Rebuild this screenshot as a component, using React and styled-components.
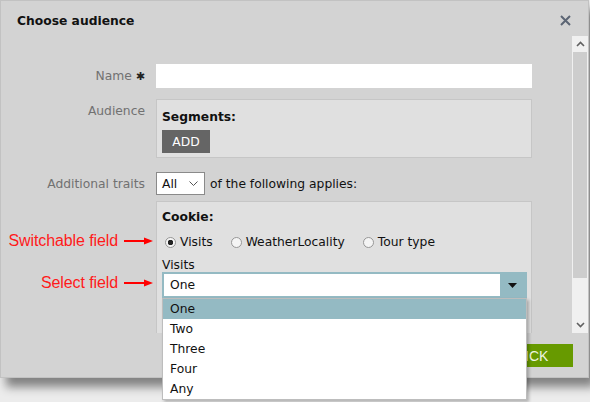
import styled, { createGlobalStyle } from "styled-components";

const GlobalStyle = createGlobalStyle`
  body {
    margin: 0;
    background: #ececec;
    font-family: "DejaVu Sans", Verdana, sans-serif;
    font-size: 12.3px;
    color: #111;
  }
`;

const options = ["One", "Two", "Three", "Four", "Any"];

function App() {
  return (
    <Page>
      <GlobalStyle />
      <Dialog>
        <Header>
          <Title>Choose audience</Title>
          <CloseButton aria-label="close">
            <svg width="11" height="11" viewBox="0 0 11 11">
              <path d="M1 1 L10 10 M10 1 L1 10" stroke="#5c6574" strokeWidth="2" />
            </svg>
          </CloseButton>
        </Header>

        <Body>
          <ScrollArea>
            <Form>
              <Label $center>
                Name <Star>✱</Star>
              </Label>
              <TextInput />

              <Label $top={5} $gap={11}>Audience</Label>
              <Panel $gap={11} $height={59} $pad={10}>
                <PanelTitle>Segments:</PanelTitle>
                <DarkButton>ADD</DarkButton>
              </Panel>

              <Label $center $gap={14}>Additional traits</Label>
              <TraitsRow $gap={14}>
                <SmallSelect>
                  All
                  <svg width="9" height="6" viewBox="0 0 9 6">
                    <path d="M0.5 0.5 L4.5 4.5 L8.5 0.5" fill="none" stroke="#555" strokeWidth="1" />
                  </svg>
                </SmallSelect>
                of the following applies:
              </TraitsRow>

              <Notes $gap={6}>
                <Note>
                  Switchable field
                  <Arrow />
                </Note>
                <Note>
                  Select field
                  <Arrow />
                </Note>
              </Notes>
              <Panel $gap={6} $height={180} $pad={8}>
                <PanelTitle>Cookie:</PanelTitle>
                <RadioRow>
                  <Radio $checked>Visits</Radio>
                  <Radio>WeatherLocality</Radio>
                  <Radio>Tour type</Radio>
                </RadioRow>
                <FieldName>Visits</FieldName>
                <Select>
                  <SelectValue>One</SelectValue>
                  <SelectToggle>
                    <svg width="9" height="5" viewBox="0 0 9 5">
                      <path d="M0 0 L9 0 L4.5 5 Z" fill="#111" />
                    </svg>
                  </SelectToggle>
                </Select>
              </Panel>
            </Form>
          </ScrollArea>
          <Scrollbar>
            <ScrollArrow>
              <svg width="9" height="6" viewBox="0 0 9 6">
                <path d="M1 5 L4.5 1.5 L8 5" fill="none" stroke="#606060" strokeWidth="1.6" />
              </svg>
            </ScrollArrow>
            <Thumb />
            <ScrollArrow>
              <svg width="9" height="6" viewBox="0 0 9 6">
                <path d="M1 1 L4.5 4.5 L8 1" fill="none" stroke="#606060" strokeWidth="1.6" />
              </svg>
            </ScrollArrow>
          </Scrollbar>
        </Body>

        <Footer>
          <PickButton>PICK</PickButton>
        </Footer>
      </Dialog>

      <OptionList>
        {options.map((o, i) => (
          <Option key={o} $active={i === 0}>
            {o}
          </Option>
        ))}
      </OptionList>
    </Page>
  );
}

function Arrow() {
  return (
    <svg width="29" height="8" viewBox="0 0 29 8">
      <path d="M0 4 L22 4" stroke="#f00" strokeWidth="2" />
      <path d="M20 0.5 L29 4 L20 7.5 Z" fill="#f00" />
    </svg>
  );
}

/* ---------------- Styled Components ---------------- */

const Page = styled.div`
  position: relative;
  width: 590px;
  height: 402px;
  overflow: hidden;
`;

const Dialog = styled.div`
  box-sizing: border-box;
  width: 589px;
  height: 378px;
  background: #d3d3d3;
  border: 1px solid #c2c2c2;
  box-shadow: 6px 9px 9px rgba(0, 0, 0, 0.45);
  display: flex;
  flex-direction: column;
`;

const Header = styled.div`
  height: 35px;
  display: flex;
  align-items: center;
  justify-content: space-between;
  padding: 0 17px 0 16px;
`;

const Title = styled.div`
  font-weight: bold;
  font-size: 12.3px;
  margin-top: 5px;
`;

const CloseButton = styled.div`
  display: flex;
  margin-top: 3px;
`;

const Body = styled.div`
  height: 297px;
  display: flex;
`;

const ScrollArea = styled.div`
  flex: 1;
  overflow: hidden;
  padding-top: 28px;
`;

const Form = styled.div`
  display: grid;
  grid-template-columns: 144px 376px;
  column-gap: 11px;
  align-items: start;
`;

const Label = styled.div`
  color: #717171;
  text-align: right;
  line-height: 14px;
  margin-top: ${(p) => p.$gap || 0}px;
  padding-top: ${(p) => p.$top || 0}px;
  align-self: ${(p) => (p.$center ? "center" : "start")};
`;

const Star = styled.span`
  color: #222;
  font-size: 11px;
`;

const TextInput = styled.div`
  height: 24px;
  background: #fff;
`;

const Panel = styled.div`
  box-sizing: border-box;
  margin-top: ${(p) => p.$gap}px;
  height: ${(p) => p.$height}px;
  background: #e0e0e0;
  border: 1px solid #c6c6c6;
  padding: ${(p) => p.$pad}px 4px 0 5px;
  display: flex;
  flex-direction: column;
  align-items: flex-start;
`;

const PanelTitle = styled.div`
  font-weight: bold;
  line-height: 14px;
`;

const DarkButton = styled.div`
  margin-top: 6px;
  width: 48px;
  height: 23px;
  background: #656565;
  color: #fff;
  display: flex;
  align-items: center;
  justify-content: center;
`;

const TraitsRow = styled.div`
  margin-top: ${(p) => p.$gap}px;
  display: flex;
  align-items: center;
  gap: 5px;
  color: #111;
`;

const SmallSelect = styled.div`
  box-sizing: border-box;
  width: 49px;
  height: 23px;
  background: #fff;
  border: 1px solid #8a8a8a;
  display: flex;
  align-items: center;
  justify-content: space-between;
  padding: 0 6px 0 5px;
`;

const Notes = styled.div`
  margin-top: ${(p) => p.$gap}px;
  margin-right: -8px;
  padding-top: 31px;
  display: flex;
  flex-direction: column;
  align-items: flex-end;
  gap: 24px;
`;

const Note = styled.div`
  height: 18px;
  display: flex;
  align-items: center;
  gap: 6px;
  color: #ff1a1a;
  font-family: "Liberation Sans", Arial, sans-serif;
  font-size: 16px;
  letter-spacing: -0.1px;
`;

const RadioRow = styled.div`
  margin-top: 10px;
  height: 16px;
  display: flex;
  gap: 18px;
  padding-left: 3px;
`;

const Radio = styled.div`
  display: flex;
  align-items: center;
  gap: 4px;
  line-height: 16px;

  &::before {
    content: "";
    box-sizing: border-box;
    width: 11px;
    height: 11px;
    border-radius: 50%;
    border: 1px solid #979797;
    background: ${(p) =>
      p.$checked
        ? "radial-gradient(circle, #222 0 2.5px, #f4f4f4 3px)"
        : "#f4f4f4"};
  }
`;

const FieldName = styled.div`
  margin-top: 8px;
  line-height: 14px;
`;

const Select = styled.div`
  box-sizing: border-box;
  width: 365px;
  height: 26px;
  border: 2px solid #94bac3;
  background: #fff;
  display: flex;
`;

const SelectValue = styled.div`
  flex: 1;
  display: flex;
  align-items: center;
  padding-left: 6px;
`;

const SelectToggle = styled.div`
  width: 25px;
  background: #94bac3;
  display: flex;
  align-items: center;
  justify-content: center;
`;

const Scrollbar = styled.div`
  width: 16px;
  background: #f0f0f0;
  display: flex;
  flex-direction: column;
`;

const ScrollArrow = styled.div`
  height: 16px;
  display: flex;
  align-items: center;
  justify-content: center;
`;

const Thumb = styled.div`
  height: 226px;
  margin: 0 1px;
  background: #cdcdcd;
  margin-bottom: auto;
`;

const Footer = styled.div`
  flex: 1;
  display: flex;
  justify-content: flex-end;
  align-items: flex-start;
  padding: 11px 15px 0 0;
`;

const PickButton = styled.div`
  width: 82px;
  height: 23px;
  background: #679a00;
  color: #eef5e0;
  font-family: "Liberation Sans", Arial, sans-serif;
  font-size: 14px;
  display: flex;
  align-items: center;
  justify-content: center;
`;

const OptionList = styled.div`
  position: absolute;
  left: 162px;
  top: 298px;
  width: 363px;
  background: #fff;
  border: 1px solid #bdbdbd;
  box-shadow: 2px 2px 3px rgba(0, 0, 0, 0.25);
`;

const Option = styled.div`
  height: 20px;
  line-height: 21px;
  padding-left: 7px;
  background: ${(p) => (p.$active ? "#94bac3" : "transparent")};
`;

export default App;
